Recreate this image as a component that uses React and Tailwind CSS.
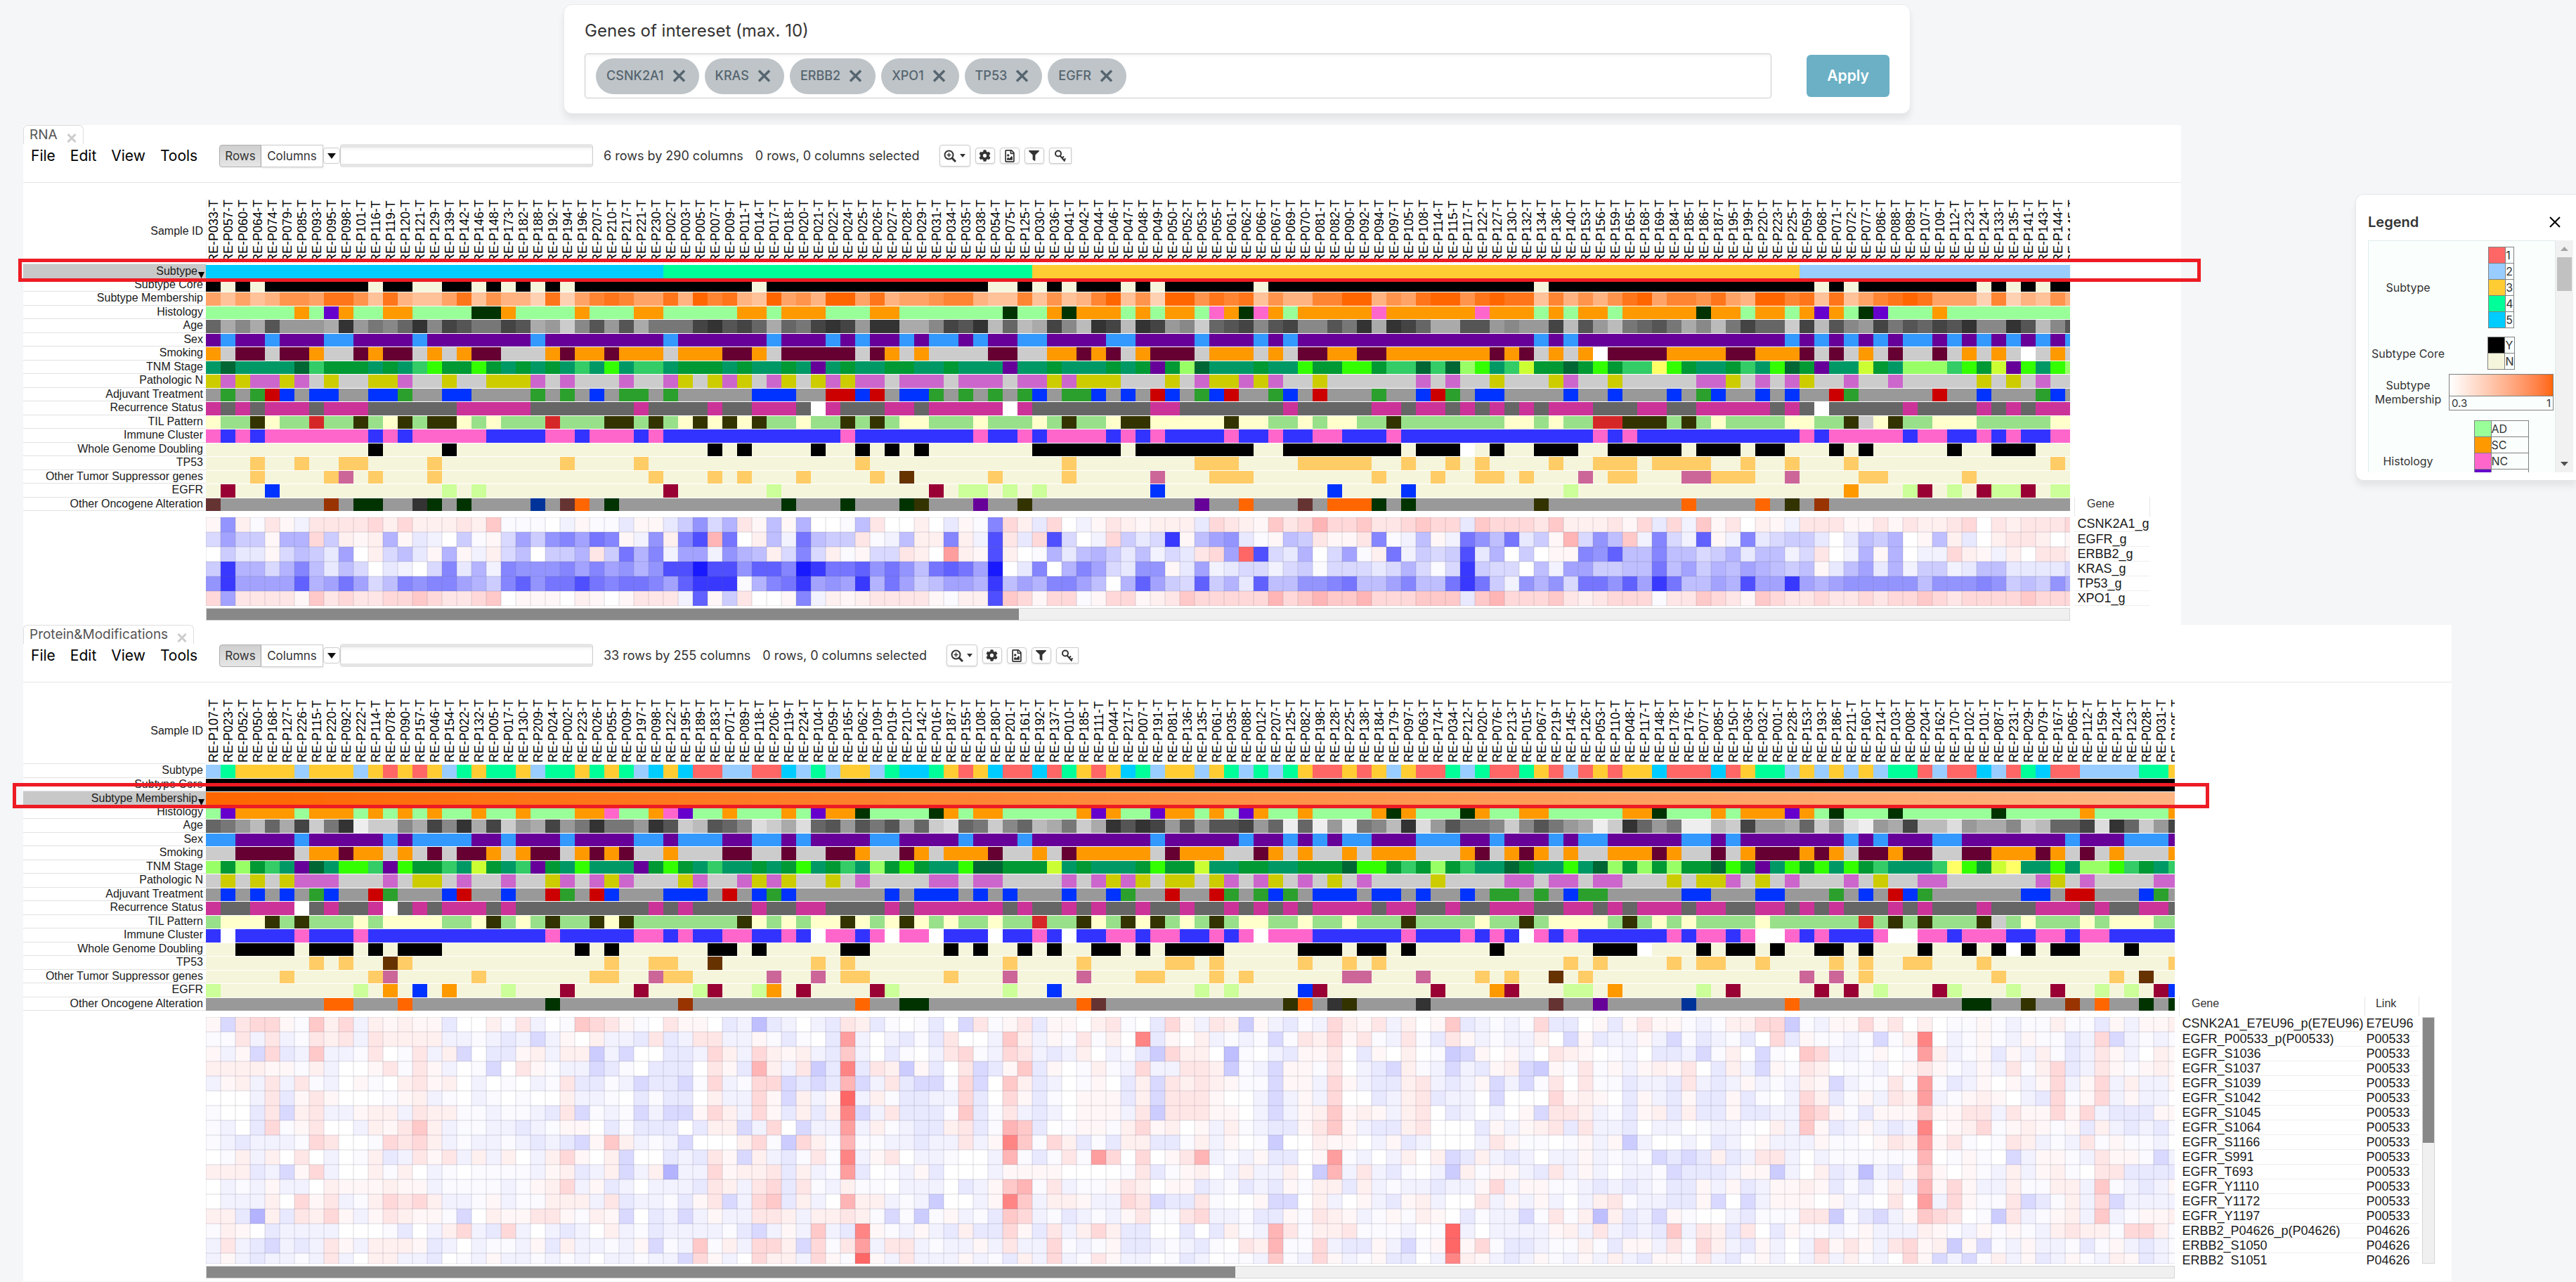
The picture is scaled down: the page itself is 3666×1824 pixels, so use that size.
import React from "react";
import { FaCog, FaFilter, FaRegFileImage } from "react-icons/fa";

const PITCH = 21;
const ANN_H = 351;

const BEIGE = "#f5f5dc";
const subtypeColors = { r: "#ff6666", b: "#99ccff", y: "#ffcc33", g: "#00ff99", c: "#00ccff" };
const coreColors = { k: "#000000", n: BEIGE, w: "#ffffff" };
const histologyColors = { g: "#99ff99", o: "#ff9900", p: "#ff66cc", v: "#6600cc", d: "#003300" };
const sexColors = { m: "#660099", f: "#3399ff" };
const smokingColors = { o: "#ff9900", g: "#cccccc", b: "#660033", w: "#ffffff" };
const stageColors = { t: "#009966", d: "#006633", m: "#33cc66", g: "#009933", l: "#33ff00", v: "#660099", y: "#ccff33", h: "#99ff66", e: "#ffff66" };
const nodeColors = { y: "#cccc00", p: "#cc66cc", g: "#cccccc" };
const adjuvantColors = { g: "#999999", n: "#2ca02c", r: "#cc0000", b: "#0033ff" };
const recurrenceColors = { m: "#cc3399", g: "#666666", w: "#ffffff" };
const tilColors = { y: "#ffffcc", g: "#98e08a", d: "#333300", r: "#d62728", s: "#cccccc" };
const immuneColors = { p: "#ff66cc", b: "#3333ff", w: "#ffffff" };
const mutationColors = { n: BEIGE, o: "#ffcc66", m: "#cc6699", z: "#663300" };
const egfrColors = { n: BEIGE, r: "#990033", b: "#0033ff", l: "#ccff99", o: "#ff9900" };
const oncogeneColors = { g: "#999999", w: "#663333", c: "#993300", d: "#003300", k: "#333333", b: "#003399", o: "#ff6600", e: "#333300", v: "#660099" };

// Run-length notation: a category letter, then how many samples in a row have it.
function runs(text, colors) {
  const out = [];
  let x = 0;
  for (const m of text.matchAll(/([a-z])(\d*)/g)) {
    const n = m[2] ? Number(m[2]) : 1;
    out.push({ x, n, fill: colors[m[1]] });
    x += n;
  }
  return out;
}

function orange(t) {
  return `rgb(255,${Math.round(255 - 153 * t)},${Math.round(255 - 255 * t)})`;
}
function membership(text) {
  return [...text].map((ch, x) => ({ x, n: 1, fill: orange(0.1 + Number(ch) * 0.1) }));
}
function membershipRamp(count) {
  return Array.from({ length: count }, (_, x) => ({ x, n: 1, fill: orange(1 - (0.51 * x) / (count - 1)) }));
}
function grays(text) {
  return [...text].map((ch, x) => ({ x, n: 1, fill: `#${ch.repeat(6)}` }));
}

// Heat levels: digits are rising reds, letters are rising blues.
const RED = [0, 0.03, 0.06, 0.1, 0.15, 0.21, 0.29, 0.38, 0.48, 0.6];
const BLUE = [0.02, 0.05, 0.09, 0.15, 0.2, 0.25, 0.3, 0.36, 0.42, 0.48, 0.54, 0.62, 0.69, 0.78, 0.9];
function heatColor(ch) {
  if (ch >= "0" && ch <= "9") {
    const v = Math.round(255 * (1 - RED[Number(ch)]));
    return `rgb(255,${v},${v})`;
  }
  const v = Math.round(255 * (1 - BLUE[ch.charCodeAt(0) - 97]));
  return `rgb(${v},${v},255)`;
}

const rowNames = [
  "Subtype", "Subtype Core", "Subtype Membership", "Histology", "Age", "Sex", "Smoking", "TNM Stage", "Pathologic N",
  "Adjuvant Treatment", "Recurrence Status", "TIL Pattern", "Immune Cluster", "Whole Genome Doubling", "TP53",
  "Other Tumor Suppressor genes", "EGFR", "Other Oncogene Alteration",
];

const rna = {
  samples:
    "033 057 060 064 074 079 085 093 095 098 101 116 119 120 121 129 139 142 146 148 173 182 188 192 194 196 207 210 217 221 230 002 003 005 007 009 011 014 017 018 020 021 022 024 025 026 027 028 029 031 034 035 038 054 075 125 030 036 041 042 044 046 047 048 049 050 052 053 055 061 062 066 067 069 070 081 082 090 092 094 097 105 108 114 115 117 122 127 130 132 134 136 140 153 156 159 165 168 169 184 185 186 187 195 199 220 223 225 059 068 071 072 077 086 088 089 107 109 112 123 124 133 135 141 143 144 145",
  rows: [
    runs("c31g25y52b19", subtypeColors),
    runs("knknk7nk2n2k2nknknknk12nk15n2knknk3nknk6nk18nk18nknk8nknknk2", coreColors),
    membership("5353466588638433583644282578755849784395649958455677433736347936299687836447799465899689883746468957768549978383578985552724364"),
    runs("g6ogvog2o2g4d2og4og3o2g5o2go3g3o2g7dg2odo3gogo2gpodpogo5po6po3gogo2go5do2go2govogdvg3og9", histologyColors),
    grays("6a8a5999a3978638457745a9c8595a77743546a67434933aa8453b6ba48b34b3498c65485488573a346aa5598994b59b7657a8b7466c4b58947564538835b85"),
    runs("mfm2fm3f2m4fm7fm8fm6fm3fmfm2fmf2mfm2f2m4f2m4fm3fmfm16fmfm14fmfmfmfmf2mfmfmfmfmf", sexColors),
    runs("ogb2gb2og2bob2gogob2g3obo2bo3go3b2ogb5gbogog4b2g2o2bobgob3go3gogb2o2b2o7bobgogowb4o4b2o3bgbgogbg2bgogogwgog", smokingColors),
    runs("tdt4dmg3tgtmlg2lgtgtgtmtltm2tg3tgt2gtvtgt2g2t2gt3vt2gt3gtgvghdt3gt2lg2l2gm2dmdhltmyg2dglgm2elgt2gmtldgvt2ygth3mlgyvltlh", stageColors),
    runs("ypyp2ypgyg2y2pg2yg2y3pgpg3pg2pygypygpygypyp2gp3gp3gp2ypy3g3ygpy2pypg2yg6pgpg2yg3ypg2yg5p2ygpgpyg2pg2pg5ygygpg2", nodeColors),
    runs("gngnrbgb2g2b2ng2b2g4ngngbgn2gng5b3g2r2brgb2ngngngnbgn2bgbgrbgnbrg2nbgrg3ng2brngb2g4bg2bg3bgnbg2bgbg2rng5rg2bg3nbg", adjuvantColors),
    runs("mgmgm3gm3g6m5g7mg4mg2m3gwmg3m2gm5wmg8m2g7mg5m2gm2gmgmgmgm3g3m2g2m5gmgwg5mg4mgmgm3", recurrenceColors),
    runs("yg2dyg2rg2dgydgd2ygyg3rg3d2gdgydydydg2yg2dgdgy2g3yg3ygdg2yd2y5dy2g2ygy2g2dg7y2gyg2r2d3gdgyg4y2g2dsydg2y3g5y2", tilColors),
    runs("pbpbp7bpbp5b4p2bp3bpb12pb8pb2pbp4bpbpb4pb2pb2p2b3pb13pbpb11pbp5bp2b2pbpb2p2", immuneColors),
    runs("n11kn4kn17knkn4kn2knknkn7k6nk8n2k8nk3wnkn2k3n2k5nk3nk2n3knkn5kn2k3n3", coreColors),
    runs("n3on2on2o2n4on8on4on14on13on8o3n4o5n2on2onon4on2o3no4n2on2on3on13on", mutationColors),
    runs("n3on4omnon3on14on3onon3on4onzn5on4on5mn3o3n8on3on2o2non3mno2n3m2o3n2mn4o2n5on7", mutationColors),
    runs("nrn2bn11lnln12rn6ln10rnl2nlnln7bn11bn4bn10ln18on3lrnlnrl2rnl2", egfrColors),
    runs("wg7cgd2g2kdgdg4bgwogdg11dg3dg3deg3vg2eg11vg2og3wgo3dgdg8eg9og4ogegcg17", oncogeneColors),
  ],
  heat: [
    "1i2a31b3333424222325aaa0b1aac11ceidg31f1g00af30020c1aj42c40b1321222c43215346445334544c544435222314c4b513021b3331131322340323334",
    "dhee1gg4e212g1cb0ea1dheijhkj1bi2jm6k02fbkfee3abf22j2bm3c4md0b4ecdn1fhica1fe3113jabf1bkifkce16dif5bjdbl1bjcdeec0cfeg01f2c0233201",
    "0ecc1dfech02dfc1g1b2df0eeg3ekgjbhhbigf2djd2a1dd320721m20agcfgecfbdc34h9mdcg0dha2kbedemcg0e011jilffjffdegcffbd30bg1g0bb421b20332",
    "enggdgjfcfd0cb0djcgbjiiijhjhigimmommilljonkklikifklkho0cj0gjhdcii1chbcddbdeadddcdgdadnedd0fbhheeffkfhegfhgfef1cfhcgbeebcffccccd",
    "inhhhhlghkhdfjijjhgejlikkmkjkkjhlnnnagjknhihngkhefhhgnfhgjjhf0glhedlegclffiijkffhjffknkebigidkkilhnkffhgmhhnhghiiiiifiiijiefeig",
    "4h333315343344543345011102101333bl1e3001jb21233331a22m54144a1441235444446456556444555c564445323444a3354315433433434454344445444",
  ],
};

const protein = {
  samples:
    "107 023 052 050 168 127 226 115 220 092 222 114 078 090 157 046 154 022 132 005 017 130 209 024 002 223 026 055 009 197 098 122 195 189 183 071 089 118 206 119 224 104 059 165 062 109 019 210 142 016 187 155 108 180 201 161 192 137 010 185 111 044 217 007 191 081 136 135 061 035 088 012 207 125 082 198 128 225 138 184 179 097 063 174 034 212 020 076 213 015 067 219 145 126 053 110 048 117 148 178 176 077 085 150 036 032 001 228 153 193 186 211 160 214 103 008 204 162 170 102 101 087 231 029 079 167 065 112 159 124 123 028 031 105",
  rows: [
    runs("bgy4by3byryrybgyg2ybg2ygygbcycr2b2r2cbgby2bgc2gyrycr2crgyrycgby2bygbgbgyr2yrybyr2gbgr2gyrbryry2cr3cryg2bybybybg2rbr2cbrgcr2b4g2y", subtypeColors),
    runs("k134", coreColors),
    membershipRamp(134),
    runs("gvo4go3gogogog2og2og3o2pg2opvg2og3ogvo2dg4dogo2g5ovog2vo2gogvog2og4odog3dog2o2g5o2dg3ogo3vogdg3dg6dg5og5o", histologyColors),
    grays("679b6a4c73ecc8a483a4c9a497377935cb568dcad659575a6cd67c86ba7ca353495955496e6e9e78b3d95778c8579aec3697eebc499a6c9de9a4bbd9aa8cb664d36c94"),
    runs("f2m4fm5fmf4m2fm3fm4f2mf3m2f2mfm4f2m4fm3fm8fm5fm2fmfmf2m3f3m2fm3fmf2m5f2mfm7fmfm3f2m7fm3f3m", sexColors),
    runs("g2b4go2bo2gogbgb2ogob2gobobg2og3b2g2bg2b2og2bogo3bg2ogbo5gbo3g2bogog2ogo3g3obgobogog2o3bog2bgob3obogb2ob2g2b2o3bogbgog3o", smokingColors),
    runs("hghgmtvdtl2mvlg2mtygtmvgtlt3vglgtmt2gtgltgmthglgttld2g3ytgt3glg2yt2g2t2g3dl2gmghgmt2dgt2ltdhghghg2dlgvtlgltlgmt3melgyet2lth2lmgtm", stageColors),
    runs("gygygyp3g3pgy2gpg2pg2ypgpypg3ypg2pypyg2ygpg4p2gp2g4pgpypygy2gypgpygpgygpg4yg4p2gp2gp2g3ygy2pgygpg3pgyg2p2g6pygpg4p2g", nodeColors),
    runs("gbgbgbgnbg2rng3brg2bg2rngrbg3b3grgbnbg6bgb3gbgbg3bg2bng2rg2rngnbngb3gb2gbg2bgn2gngbn2g5b2g3b2g3ngbgrbng6b2gr2g3bng", adjuvantColors),
    runs("mg2m3wgmg2mwgmgm3gmg9mgmg4mg2m2g4mgm6gmg2mgmg2mg2mg2mgmgmgm4gm2g2mg2m3g2m2gmgm3gm2g2m2gmgmg3mgmg3mg3m3gmg2m2g", recurrenceColors),
    runs("gy3dgdg3ygy4g2ydgygdg2dydg7dygygy2dygydygyg2yg2rg2dygdydgygdgy2g2yg2yg3dg4yg2dgy4gdgygyg4yg6rgdgdg3dsgyg3ygy3g2", tilColors),
    runs("bwb4pb3pb12pb5p2bpb2p2b2pbwp2bpwp2wb3wb2pbwb2p2bp2b2pbpwp3b6pb3pbpbwpbpb6pbp2bpw2pbpb3pw2p2bp3b2p2bp2b5", immuneColors),
    runs("n2k4nk3nknk3n9knkn6k2nkn5k2n5knkn2knkn2k2nknk4n5k3nk2nkn5kn6k3wn3knk2nkn2k2nkn3kn2knkwknk2n3kn3", coreColors),
    runs("n7onon2zon13on2o2n2zn6onon10on4on5o2non5on2onon12onon4ono2n2on4onon2o2n3on12o", mutationColors),
    runs("n5on5omn5on7o2n2mo2n5mn2mno2n5on3mn4mn3o2n3onon6m2n3mn3onon2znon14mnmnon8on7onzn2", mutationColors),
    runs("ln9lnonbnon3ln3rn4rn3lrn2lonrn4rln7ln2bn9lnln4brn7rn3orn3l2non5lnrn5rnrnln3rln3ln2rn2lnlnrb", egfrColors),
    runs("g8o2g3og9dg8cg11og2d2g10owg12eogkeg4kg8wg2vg5bg6og11d2g2eg2cgog2dgd", oncogeneColors),
  ],
  heat: [
    "1d3441a524b21211c002a3b0a5431a03110cbfcb0bc32ca0ac0d3a13c11023a0c41b32e1bcab4213b2015cbaba" + "4cc01c1311" + "aba2244eab" + "11413020aa" + "1abaa2aac1" + "b112",
    "aa3b3ba323" + "b32222bbab" + "cbdb102bbc" + "3cb33bb1ac" + "a0c7b0bcac" + "300b52b1a3" + "a208c102ba" + "bada32413a" + "b3ac31babb" + "20d1cbb1bd" + "acbac04c1a" + "abada280ba" + "1ab1aacb4d" + "baba",
    "1b1d4cb5bb" + "a30a3b2d0c" + "c12b22ebd0" + "0ccb42b421" + "2bc5b0ca0b" + "34ab43bcb2" + "0bace4220f" + "a0bc1130c1" + "020aed101b" + "03210ab0cc" + "bda20da054" + "bba10a72ba" + "1c1b2acb31" + "b021",
    "222211a2b0" + "013a31b0ad" + "031abbdca0" + "ccc031c62b" + "3ec8c32e1c" + "03dc15c10a" + "2ab4bb332e" + "abd11a30bc" + "d2abdbc12d" + "e1a3a1b121" + "30c2bd1a32" + "0aab0131ab" + "1b3a24cb31" + "a121",
    "b12b3b3ab0" + "1a023120b0" + "a0ba3ccabd" + "ccda4ba44d" + "cdc6db3cdd" + "a4d052cb0a" + "10c2d32321" + "aad11b41bc" + "c23bcb1dbd" + "a303aacbbc" + "3bcb1bab21" + "dbaa3a7acb" + "101b14b14b" + "2bb1",
    "000b3c1310" + "00a12ba0ba" + "0a002bba0c" + "acc02bb41d" + "2b19b2accb" + "b4c041ca01" + "11c2d33310" + "0bdb1b400c" + "b23cbb0d00" + "041210c1bc" + "1cc1ca0b42" + "ca1b327ba1" + "210bc4a14b" + "1bb0",
    "a00c3d23bb" + "122b322aab" + "aabc3dabad" + "bdd142b41c" + "2c28db3ccc" + "a5ca3bcb01" + "11b3e33311" + "0bdb125121" + "b230cb0b01" + "d332bac12c" + "2cc1ccbb54" + "1ac1115113" + "3b311414bc" + "cc11",
    "ab0c4a1300" + "b21352baab" + "bcba110cac" + "cc0c22db40" + "dbb7b2abcc" + "23ca65c0a1" + "1a241201b2" + "abcc1351bc" + "c23000c1b1" + "23c3bbc0bb" + "0abba02b51" + "cb1bcb8012" + "4a121a1c2b" + "cbca",
    "abcbbba430" + "0a4342babb" + "abcbcd152b" + "abd00024ae" + "42a6aabbcb" + "b3b185a42c" + "ac22cca2b1" + "0ae002110b" + "1cb000b31a" + "a0a1b1eb00" + "b0cb01bbb1" + "aa0132713a" + "0a32bab3a1" + "aab0",
    "0a2b2030b0" + "a2cb313b2b" + "20b24102d0" + "0cbc31d2bc" + "a3a8b130bb" + "a00b6aca3a" + "74040136ba" + "b1cc017ab0" + "b202dc2bcb" + "0bb1babadc" + "dc2cb33b0b" + "aaaaaa60a1" + "a0db11ab31" + "1adb",
    "222cbd14b0" + "02a20ba0aa" + "aab12cb2db" + "2gbb41223c" + "2ba7c0ab1c" + "000b111100" + "00a3ca120b" + "2bb20e6b3b" + "ca0be2a11b" + "c3b1b0bbad" + "cccb11eb02" + "cbfbc15101" + "ab2b12a033" + "cccc",
    "0bab1bb021" + "11211baaaa" + "ba124b1cb0" + "bbbc32b34c" + "3ab2aa0bbb" + "0cb156a3ba" + "a132011cba" + "cbc1a22c2b" + "abbcbb14b1" + "1aabcbcbac" + "c1b1cb1121" + "caca2b6141" + "bb2aa22b5a" + "bcb1",
    "0bbb20413b" + "a24342bba1" + "baa222b3cb" + "bac13db45c" + "2b0622babe" + "00b185b221" + "bb43dcc3a0" + "01dd02b01b" + "c12b003b1b" + "1b0b23abbc" + "c1d0db1110" + "1ba0307b41" + "aa3dca2b4d" + "bbbb",
    "22cg2c3241" + "b13211ad02" + "11331a21d0" + "cbdb1bb332" + "b2232adaea" + "1bac54bacb" + "ab13aa34bb" + "acc1a321ba" + "1a210cabbd" + "a3a2f2cbd1" + "a00bcaaa33" + "eacdb15430" + "ae3ba12b5b" + "a112",
    "a210cbbbb0" + "00ac0b24bc" + "4b0bcb02ba" + "cbbbbacdb1" + "b5bc81ab1b" + "c2cc41c3b2" + "42cc00c0c2" + "ab63a223aa" + "ab0a9b0bbb" + "b12b3bcbc5" + "b32c30c1aa" + "ba1bbb21ab" + "1a1ab2322a" + "442a",
    "b3bcdbcb31" + "b2221cb0ba" + "ab1c2bbab1" + "dab5a2b442" + "d4a37b33ba" + "bb1b3bb4ab" + "a1ccbabca0" + "326aa4bcc1" + "bda1914acc" + "baa2ac11b3" + "a42bc1b0b4" + "131b3412e1" + "dab1bbaca1" + "bcba",
    "b1bcbbab3b" + "022bbc0ab1" + "bbabab0bba" + "bbd41b0422" + "b41a91b3bb" + "b1bac2b4ba" + "31bb0acb0a" + "ab5ab41ba1" + "cc0b821bcb" + "1ab1b2bc11" + "a3bca1b0b3" + "b2ab041dbd" + "a2b1cb1ab2" + "1cba",
  ],
  genes: [
    ["CSNK2A1_E7EU96_p(E7EU96)", "E7EU96"], ["EGFR_P00533_p(P00533)", "P00533"], ["EGFR_S1036", "P00533"],
    ["EGFR_S1037", "P00533"], ["EGFR_S1039", "P00533"], ["EGFR_S1042", "P00533"], ["EGFR_S1045", "P00533"],
    ["EGFR_S1064", "P00533"], ["EGFR_S1166", "P00533"], ["EGFR_S991", "P00533"], ["EGFR_T693", "P00533"],
    ["EGFR_Y1110", "P00533"], ["EGFR_Y1172", "P00533"], ["EGFR_Y1197", "P00533"], ["ERBB2_P04626_p(P04626)", "P04626"],
    ["ERBB2_S1050", "P04626"], ["ERBB2_S1051", "P04626"],
  ],
};
const rnaGenes = ["CSNK2A1_g", "EGFR_g", "ERBB2_g", "KRAS_g", "TP53_g", "XPO1_g"];

function SampleIds({ samples }) {
  return (
    <ul className="flex h-[116px] items-end overflow-hidden">
      {samples.split(" ").map((s) => (
        <li
          key={s}
          className="flex h-[93px] w-[21px] shrink-0 rotate-180 items-center border-r border-[#f0f0f0] pt-[2px] text-lg leading-[20px] whitespace-nowrap text-black [writing-mode:vertical-rl]"
        >
          {`RE-P${s}-T`}
        </li>
      ))}
    </ul>
  );
}

function AnnotationChart({ rows }) {
  return (
    <svg className="block w-full" height={ANN_H} shapeRendering="crispEdges" role="img" aria-label="Sample annotations">
      {rows.map((row, i) => {
        const y = Math.round(i * 19.5) + 1;
        const h = Math.round((i + 1) * 19.5) - y;
        return row.map((c) => (
          <rect key={`${i}-${c.x}`} x={c.x * PITCH} y={y} width={c.n * PITCH} height={h} fill={c.fill} />
        ));
      })}
    </svg>
  );
}

function HeatChart({ rows, height }) {
  const cols = rows[0].length;
  const grid = "rgba(110,110,130,0.12)";
  return (
    <svg className="block w-full" height={height} shapeRendering="crispEdges" role="img" aria-label="Expression heat map">
      {rows.map((row, i) =>
        [...row].map((ch, j) => (
          <rect key={`${i}-${j}`} x={j * PITCH} y={i * PITCH} width={PITCH} height={PITCH} fill={heatColor(ch)} />
        ))
      )}
      {rows.map((_, i) => (
        <rect key={`h${i}`} x="0" y={i * PITCH - 1} width="100%" height="2" fill={grid} />
      ))}
      {Array.from({ length: cols + 1 }, (_, j) => (
        <rect key={`v${j}`} x={j * PITCH - 1} y="0" width="2" height="100%" fill={grid} />
      ))}
      <rect x="0" y={height - 1} width="100%" height="1" fill={grid} />
    </svg>
  );
}

function RowLabels({ active }) {
  return (
    <ul className="grid h-[351px] grid-rows-[repeat(18,minmax(0,1fr))] text-base leading-[18px] text-[#1a1a1a]">
      {rowNames.map((name, i) =>
        i === active ? (
          <li key={name} className="relative flex items-center justify-end bg-[#c8c8c8] pr-3 whitespace-nowrap">
            {name}
            <span className="absolute right-[2px] bottom-0 h-[9px] w-[9px]">
              <svg viewBox="0 0 9 9" className="block"><path d="M0 0H9L4.500 9Z" fill="#000" /></svg>
            </span>
          </li>
        ) : (
          <li key={name} className="flex items-center justify-end border-b border-[#e2e2e2] pr-1 whitespace-nowrap">
            {name}
          </li>
        )
      )}
    </ul>
  );
}

const iconButton =
  "flex h-[23px] w-[28px] items-center justify-center rounded border border-[#ccc] bg-white text-[#333] shadow-sm";

function Toolbar({ id, info }) {
  return (
    <div className="flex h-[55px] items-start border-b border-[#e5e5e5] text-[#333]">
      <nav className="ml-[11px] flex h-[33px] w-[268px] items-center gap-[21px] text-[21px] leading-6 text-black">
        <button>File</button>
        <button>Edit</button>
        <button>View</button>
        <button>Tools</button>
      </nav>
      <div className="flex h-[33px] items-center text-lg leading-5">
        <button className="h-[32px] w-[60px] rounded-l border border-[#adadad] bg-gradient-to-b from-[#cfcfcf] to-[#e6e6e6] text-[17px]">Rows</button>
        <button className="h-[32px] w-[88px] border border-l-0 border-[#ccc] bg-white text-[17px] shadow-sm">Columns</button>
        <button aria-label="Search options" className="flex h-[23px] w-[24px] items-center justify-center rounded border border-[#ccc] bg-white">
          <svg width="12" height="8" viewBox="0 0 12 8"><path d="M0 0H12L6 8Z" fill="#111" /></svg>
        </button>
        <input
          aria-label={`Search ${id}`}
          className="h-[33px] w-[360px] rounded border border-x-[#ccc] border-y-[5px] border-y-[#e5e5e5] bg-white px-2 shadow-inner"
        />
        <span className="ml-[15px] whitespace-pre">{info}</span>
        <span className="ml-[17px]">0 rows, 0 columns selected</span>
        <div className="ml-7 flex items-center gap-[7px]">
          <button aria-label="Zoom" className="flex h-[31px] w-[44px] items-center justify-center gap-[5px] rounded border border-[#ccc] bg-white shadow-sm">
            <svg width="18" height="18" viewBox="0 0 18 18" fill="none" stroke="#333" strokeWidth="2">
              <circle cx="7.500" cy="7.500" r="6" />
              <path d="M12 12L17 17" strokeWidth="3" />
              <path d="M4.500 7.500H10.500M7.500 4.500V10.500" strokeWidth="1.500" />
            </svg>
            <svg width="8" height="5" viewBox="0 0 8 5"><path d="M0 0H8L4 5Z" fill="#333" /></svg>
          </button>
          <button aria-label="Options" className={iconButton}><FaCog size={17} /></button>
          <button aria-label="Save image" className={iconButton}><FaRegFileImage size={18} /></button>
          <button aria-label="Filter" className={iconButton}><FaFilter size={15} /></button>
          <button aria-label="Color key" className="flex h-[23px] w-[32px] items-center justify-center rounded-l border border-[#ccc] bg-white shadow-sm">
            <svg width="18" height="18" viewBox="0 0 18 18" fill="none" stroke="#333" strokeWidth="2">
              <circle cx="6" cy="5.500" r="4" />
              <path d="M8.500 8.500L15.500 16.500M11.500 12L14 9.500M14 15L16.500 12.500" />
            </svg>
          </button>
        </div>
      </div>
    </div>
  );
}

function Tab({ name }) {
  return (
    <div className="flex h-[27px]">
      <div className="flex items-center gap-[13px] rounded-t-md border border-b-0 border-[#ddd] pr-[9px] pl-2 text-[19px] leading-5 text-[#555]">
        <span>{name}</span>
        <button aria-label={`Close ${name}`} className="mt-2 text-[#ccc]">
          <svg width="14" height="13" viewBox="0 0 14 13"><path d="M1.500 1L12.500 12M12.500 1L1.500 12" stroke="#ccc" strokeWidth="3" /></svg>
        </button>
      </div>
    </div>
  );
}

function LabelColumn({ active }) {
  return (
    <div className="w-[260px] shrink-0">
      <div className="flex h-[116px] items-end justify-end border-b border-[#e2e2e2] pr-1 pb-[37px] text-base leading-[18px] text-[#1a1a1a]">
        Sample ID
      </div>
      <RowLabels active={active} />
    </div>
  );
}

function Scrollbar({ thumb }) {
  return (
    <div className="mt-[3px] h-[18px] border border-[#d5d5d5] bg-[#f0f0f0]">
      <div className={`h-full bg-[#888] ${thumb}`} />
    </div>
  );
}

function RnaPanel() {
  return (
    <section className="w-[84.53%] shrink-0 bg-white pb-[6px]">
      <Tab name="RNA" />
      <Toolbar id="RNA" info="6 rows by 290 columns" />
      <div className="relative flex font-['Liberation_Sans',Arial,sans-serif]">
        <LabelColumn active={0} />
        <div className="min-w-0 flex-1">
          <SampleIds samples={rna.samples} />
          <AnnotationChart rows={rna.rows} />
          <div className="pt-[9px]">
            <HeatChart rows={rna.heat} height={126} />
          </div>
          <Scrollbar thumb="w-[43.6%]" />
        </div>
        <div className="flex w-[158px] shrink-0 flex-col pt-[447px] pl-[6px]">
          <table className="w-[108px] border-collapse text-left">
            <thead>
              <tr className="h-[28px]">
                <th className="border-x border-[#e5e5e5] pb-2 pl-[17px] text-base leading-5 font-normal text-[#333]">Gene</th>
              </tr>
            </thead>
            <tbody>
              {rnaGenes.map((g) => (
                <tr key={g} className="h-[21px] border-b border-[#eee]">
                  <td className="p-0 pl-[4px] text-lg leading-[18px] text-[#1a1a1a]">{g}</td>
                </tr>
              ))}
            </tbody>
          </table>
        </div>
        <div className="absolute top-[108px] -right-[28px] -left-[7px] h-[33px] border-5 border-[#ed1c24]" />
      </div>
    </section>
  );
}

function ProteinPanel() {
  return (
    <section className="ml-[33px] w-[94.27%] bg-white pb-1">
      <Tab name="Protein&Modifications" />
      <Toolbar id="protein" info="33 rows by 255 columns" />
      <div className="relative flex font-['Liberation_Sans',Arial,sans-serif]">
        <LabelColumn active={2} />
        <div className="min-w-0 flex-1">
          <SampleIds samples={protein.samples} />
          <AnnotationChart rows={protein.rows} />
          <div className="pt-[9px]">
            <HeatChart rows={protein.heat} height={351} />
          </div>
          <Scrollbar thumb="w-[52.3%]" />
        </div>
        <div className="flex w-[394px] shrink-0 pt-[447px] pl-[6px]">
          <div className="h-[381px] w-[342px] overflow-hidden">
            <table className="w-full table-fixed border-collapse text-left text-lg leading-[18px] text-[#1a1a1a]">
              <thead>
                <tr className="h-[28px] text-base leading-5 text-[#333]">
                  <th className="w-[264px] border-x border-[#e5e5e5] pb-2 pl-[17px] font-normal">Gene</th>
                  <th className="border-r border-[#e5e5e5] pb-2 pl-[15px] font-normal">Link</th>
                </tr>
              </thead>
              <tbody>
                {protein.genes.map(([g, link]) => (
                  <tr key={g} className="h-[21px] border-b border-[#eee]">
                    <td className="p-0 pl-[4px] whitespace-nowrap">{g}</td>
                    <td className="p-0 pl-[2px]">{link}</td>
                  </tr>
                ))}
              </tbody>
            </table>
          </div>
          <div className="mt-[29px] ml-[4px] h-[351px] w-[18px] border border-[#d5d5d5] bg-[#f0f0f0]">
            <div className="h-[51%] bg-[#888]" />
          </div>
        </div>
        <div className="absolute top-[143px] right-[345px] -left-[15px] h-[36px] border-5 border-[#ed1c24]" />
      </div>
    </section>
  );
}

function Swatches({ items, wide }) {
  return (
    <table className="mx-auto border-collapse text-base leading-5">
      <tbody>
        {items.map(([label, color]) => (
          <tr key={color} className="h-[23px]">
            <td className={`w-[24px] border border-[#808080] ${color}`} />
            <td className={`border border-[#808080] p-0 ${wide ? "w-[53px]" : ""}`}>{label}</td>
          </tr>
        ))}
      </tbody>
    </table>
  );
}

function Legend() {
  return (
    <aside className="mt-[98px] ml-auto h-[408px] w-[314px] rounded-l-xl border border-r-0 border-[#e5e7e9] bg-white pt-[26px] pl-[17px] text-[#333] shadow-[0_8px_10px_rgba(0,0,0,0.07)]">
      <div className="mb-[13px] flex h-[26px] items-center justify-between pr-[22px]">
        <h2 className="text-xl leading-6 font-semibold">Legend</h2>
        <button aria-label="Close legend">
          <svg width="16" height="16" viewBox="0 0 16 16"><path d="M1 1L15 15M15 1L1 15" stroke="#000" strokeWidth="2" /></svg>
        </button>
      </div>
      <div className="flex h-[330px] w-[292px]">
        <div className="h-full min-w-0 flex-1 overflow-hidden border border-b-0 border-[#dfecea] bg-[#fafffe] text-base leading-5">
          <div className="flex h-[127px] items-center pt-[4px]">
            <div className="w-[112px] text-center">Subtype</div>
            <div className="flex-1">
              <Swatches items={[["1", "bg-[#ff6666]"], ["2", "bg-[#99ccff]"], ["3", "bg-[#ffcc33]"], ["4", "bg-[#00ff99]"], ["5", "bg-[#00ccff]"]]} />
            </div>
          </div>
          <div className="flex h-[62px] items-center pt-[3px]">
            <div className="w-[112px] text-center">Subtype Core</div>
            <div className="flex-1">
              <Swatches items={[["Y", "bg-black"], ["N", "bg-[#f5f5dc]"]]} />
            </div>
          </div>
          <div className="mr-[2px] flex items-center justify-between">
            <div className="w-[112px] text-center">Subtype Membership</div>
            <div className="w-[149px] border border-[#808080]">
              <div className="h-[31px] border-b border-[#808080] bg-gradient-to-r from-white to-[#ff6600]" />
              <div className="flex h-[19px] items-center justify-between px-[3px] text-[15px]">
                <span>0.3</span>
                <span>1</span>
              </div>
            </div>
          </div>
          <div className="mt-[14px] flex items-center">
            <div className="w-[112px] text-center">Histology</div>
            <div className="flex-1">
              <Swatches wide items={[["AD", "bg-[#99ff99]"], ["SC", "bg-[#ff9900]"], ["NC", "bg-[#ff66cc]"], ["", "bg-[#6600cc]"], ["", "bg-[#003300]"]]} />
            </div>
          </div>
        </div>
        <div className="flex w-[25px] flex-col items-center bg-[#f1f1f1] py-[9px]">
          <svg width="11" height="6" viewBox="0 0 11 6"><path d="M0 6H11L5.500 0Z" fill="#a3a3a3" /></svg>
          <div className="mt-[9px] h-[48px] w-[21px] bg-[#c1c1c1]" />
          <svg className="mt-auto" width="11" height="6" viewBox="0 0 11 6"><path d="M0 0H11L5.500 6Z" fill="#505050" /></svg>
        </div>
      </div>
    </aside>
  );
}

function GenesCard() {
  return (
    <form className="mt-[6px] mb-4 ml-[21.88%] w-[52.29%] rounded-xl border border-[#e8eaec] bg-white px-[29px] pt-[23px] pb-[21px] shadow-[0_8px_10px_rgba(0,0,0,0.07)]">
      <label htmlFor="genes" className="block text-2xl leading-7 text-[#333]">Genes of intereset (max. 10)</label>
      <div className="mt-[18px] flex items-center gap-[50px]">
        <div className="flex h-[64px] min-w-0 flex-1 items-center gap-2 rounded border border-[#ccc] px-[15px] shadow-inner">
          {["CSNK2A1", "KRAS", "ERBB2", "XPO1", "TP53", "EGFR"].map((g) => (
            <span key={g} className="flex h-[51px] items-center gap-3 rounded-full bg-[#bec4c8] pr-[19px] pl-[15px] text-lg leading-6 font-medium text-[#56656f]">
              {g}
              <button type="button" aria-label={`Remove ${g}`}>
                <svg width="19" height="18" viewBox="0 0 19 18"><path d="M2 1.500L17 16.500M17 1.500L2 16.500" stroke="#56656f" strokeWidth="3.500" /></svg>
              </button>
            </span>
          ))}
          <input id="genes" className="h-[40px] min-w-0 flex-1 outline-none" />
        </div>
        <button type="button" className="h-[60px] w-[118px] rounded-md bg-[#6bb0c5] text-[21px] leading-7 font-semibold text-white">Apply</button>
      </div>
    </form>
  );
}

export default function App() {
  return (
    <main className="min-h-screen overflow-hidden bg-[#f4f6f8] font-['Inter',sans-serif]">
      <GenesCard />
      <div className="flex items-start pl-[33px]">
        <RnaPanel />
        <Legend />
      </div>
      <ProteinPanel />
    </main>
  );
}
